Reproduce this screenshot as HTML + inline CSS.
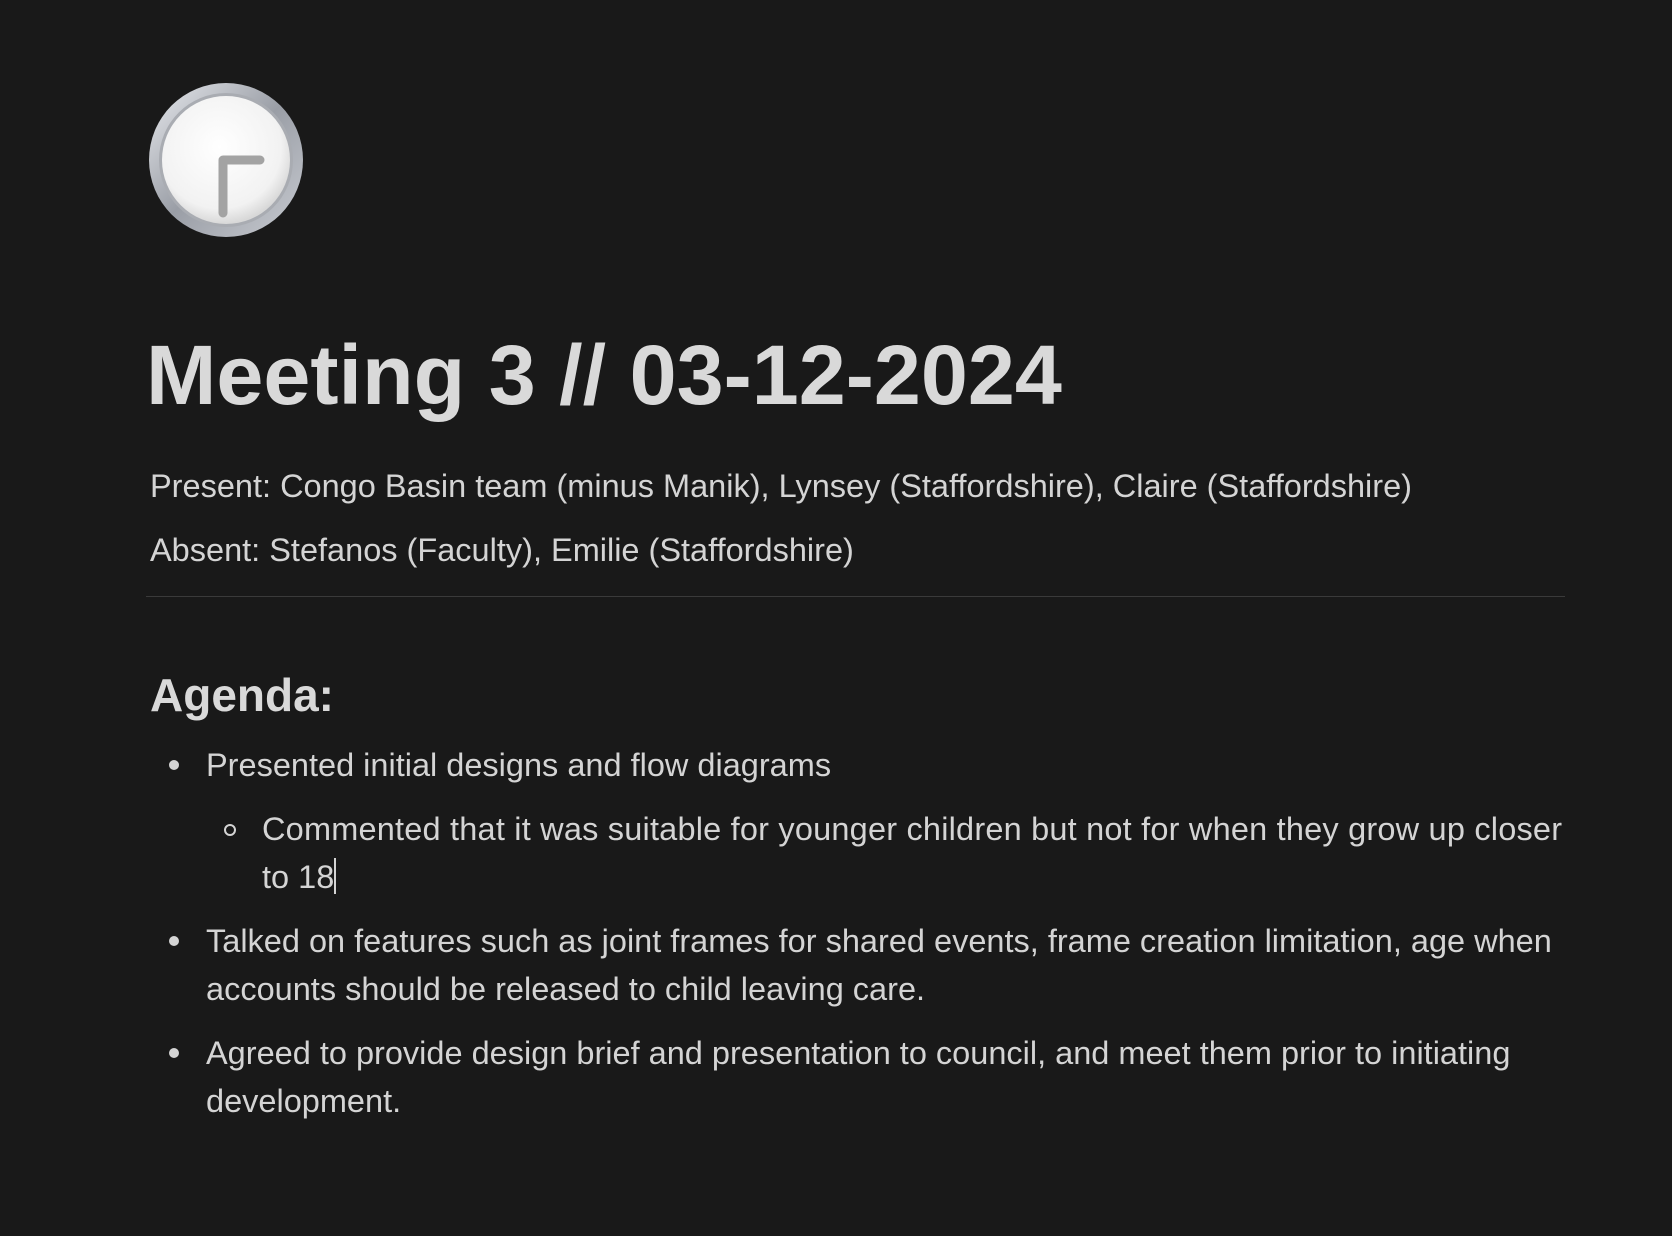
<!DOCTYPE html>
<html><head><meta charset="utf-8"><style>
html,body{margin:0;padding:0;background:#191919;width:1672px;height:1236px;overflow:hidden}
body{font-family:"Liberation Sans",sans-serif;color:#d4d4d4;position:relative}
.t{position:absolute;white-space:nowrap;font-size:32.5px;line-height:40px;letter-spacing:0}
.dot{position:absolute;width:10px;height:10px;border-radius:50%;background:#d4d4d4}
.circ{position:absolute;width:8px;height:8px;border-radius:50%;border:2px solid #d4d4d4}
</style></head><body>
<svg style="position:absolute;left:146px;top:80px" width="160" height="160" viewBox="0 0 160 160">
<defs>
<radialGradient id="f" cx="0.45" cy="0.4" r="0.6"><stop offset="0" stop-color="#fff"/><stop offset="0.8" stop-color="#f2f2f2"/><stop offset="1" stop-color="#d8d8d8"/></radialGradient>
<linearGradient id="r" x1="0" y1="0" x2="1" y2="1"><stop offset="0" stop-color="#e8eaee"/><stop offset="0.5" stop-color="#9a9ea6"/><stop offset="1" stop-color="#c9ccd2"/></linearGradient>
</defs>
<circle cx="80" cy="80" r="77" fill="url(#r)"/>
<circle cx="80" cy="80" r="67" fill="#a9acb2"/>
<circle cx="80" cy="80" r="64" fill="url(#f)"/>
<path d="M77 133 V80 H114" fill="none" stroke="#a3a3a3" stroke-width="9" stroke-linecap="round" stroke-linejoin="round"/>
</svg>
<div class="t" style="left:146px;top:325px;font-size:84.5px;line-height:100px;font-weight:bold;color:#d9d9d9">Meeting 3 // 03-12-2024</div>
<div class="t" style="left:150px;top:466px">Present: Congo Basin team (minus Manik), Lynsey (Staffordshire), Claire (Staffordshire)</div>
<div class="t" style="left:150px;top:530px">Absent: Stefanos (Faculty), Emilie (Staffordshire)</div>
<div style="position:absolute;left:146px;top:596px;width:1419px;height:1px;background:#3a3a3a"></div>
<div class="t" style="left:150px;top:670px;font-size:46px;line-height:50px;font-weight:bold;color:#d9d9d9">Agenda:</div>
<div class="dot" style="left:169px;top:760px"></div>
<div class="t" style="left:206px;top:745px">Presented initial designs and flow diagrams</div>
<div class="circ" style="left:224px;top:824px"></div>
<div class="t" style="left:262px;top:809px;letter-spacing:0.2px">Commented that it was suitable for younger children but not for when they grow up closer</div>
<div class="t" style="left:262px;top:857px">to 18<span style="display:inline-block;width:2px;height:36px;background:#d4d4d4;vertical-align:-6px"></span></div>
<div class="dot" style="left:169px;top:936px"></div>
<div class="t" style="left:206px;top:921px">Talked on features such as joint frames for shared events, frame creation limitation, age when</div>
<div class="t" style="left:206px;top:969px">accounts should be released to child leaving care.</div>
<div class="dot" style="left:169px;top:1048px"></div>
<div class="t" style="left:206px;top:1033px">Agreed to provide design brief and presentation to council, and meet them prior to initiating</div>
<div class="t" style="left:206px;top:1081px">development.</div>
</body></html>
